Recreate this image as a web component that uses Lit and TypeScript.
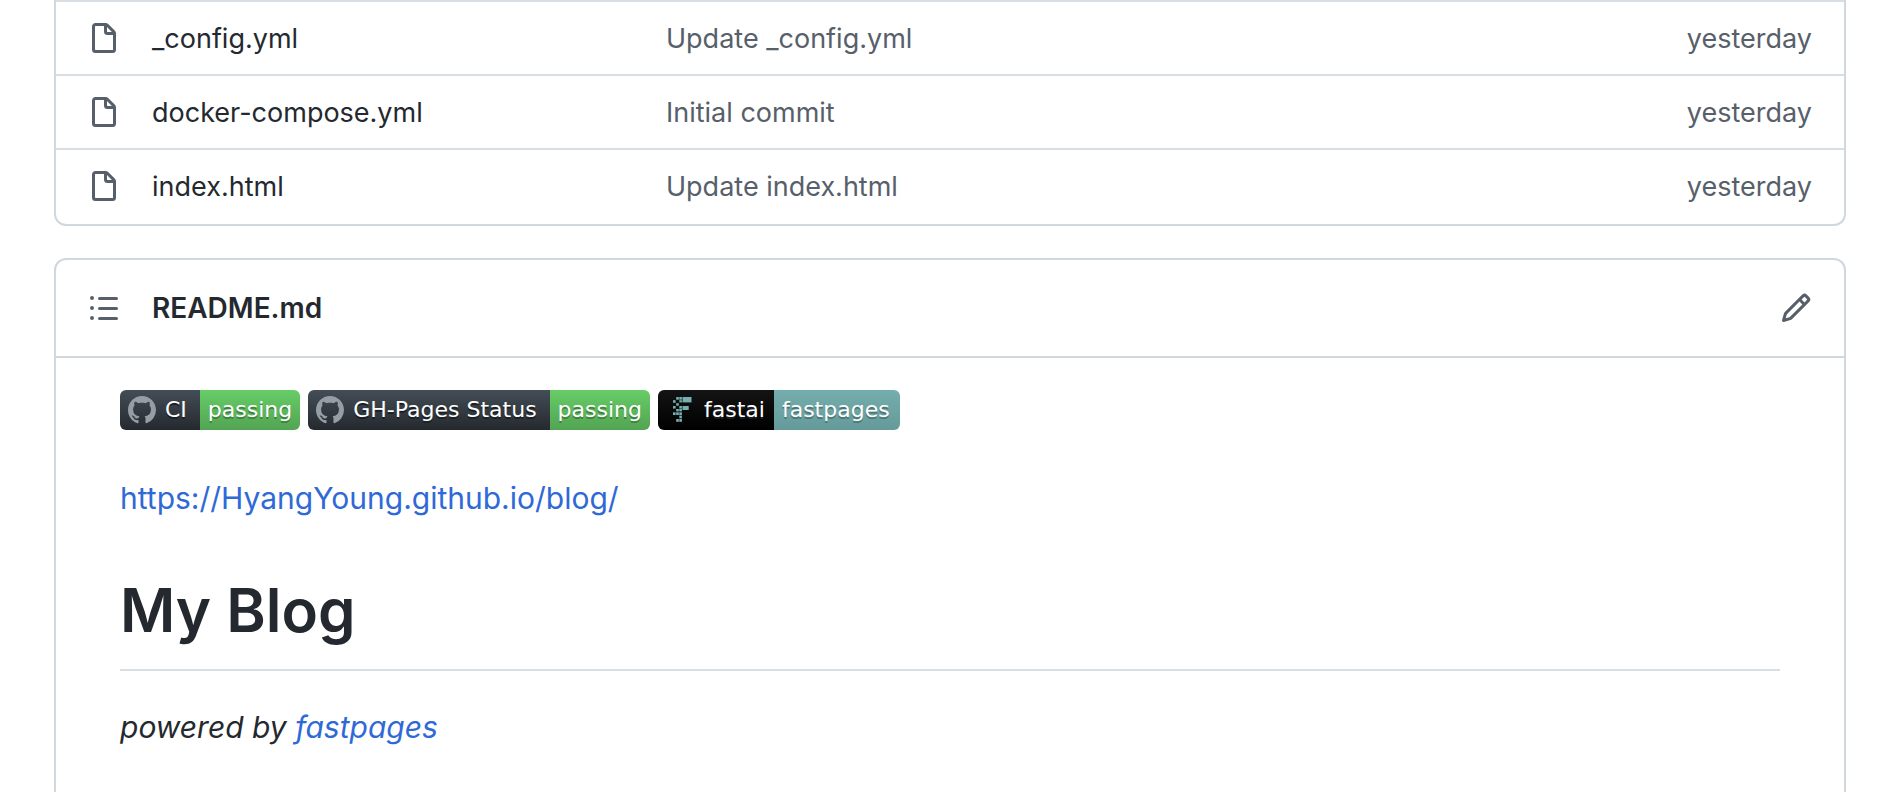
import { LitElement, html, css, svg } from "lit";
import { customElement, property } from "lit/decorators.js";

const FILES = [
  { name: "_config.yml", message: "Update _config.yml", age: "yesterday" },
  { name: "docker-compose.yml", message: "Initial commit", age: "yesterday" },
  { name: "index.html", message: "Update index.html", age: "yesterday" },
];

const OCTICONS = {
  file: "M3.75 1.5a.25.25 0 00-.25.25v11.5c0 .138.112.25.25.25h8.5a.25.25 0 00.25-.25V6H9.75A1.75 1.75 0 018 4.25V1.5H3.75zm5.75.56v2.19c0 .138.112.25.25.25h2.19L9.5 2.06zM2 1.75C2 .784 2.784 0 3.75 0h5.086c.464 0 .909.184 1.237.513l3.414 3.414c.329.328.513.773.513 1.237v8.086A1.75 1.75 0 0112.25 15h-8.5A1.75 1.75 0 012 13.25V1.75z",
  list: "M2 4a1 1 0 100-2 1 1 0 000 2zm3.75-1.5a.75.75 0 000 1.5h8.5a.75.75 0 000-1.5h-8.5zm0 5a.75.75 0 000 1.5h8.5a.75.75 0 000-1.5h-8.5zm0 5a.75.75 0 000 1.5h8.5a.75.75 0 000-1.5h-8.5zM3 8a1 1 0 11-2 0 1 1 0 012 0zm-1 6a1 1 0 100-2 1 1 0 000 2z",
  pencil: "M11.013 1.427a1.75 1.75 0 012.474 0l1.086 1.086a1.75 1.75 0 010 2.474l-8.61 8.61c-.21.21-.47.364-.756.445l-3.251.93a.75.75 0 01-.927-.928l.929-3.25a1.75 1.75 0 01.445-.758l8.61-8.61zm1.414 1.06a.25.25 0 00-.354 0L10.811 3.75l1.439 1.44 1.263-1.263a.25.25 0 000-.354l-1.086-1.086zM11.189 6.25L9.75 4.81l-6.286 6.287a.25.25 0 00-.064.108l-.558 1.953 1.953-.558a.249.249 0 00.108-.064l6.286-6.286z",
  mark: "M8 0C3.58 0 0 3.58 0 8c0 3.54 2.29 6.53 5.47 7.59.4.07.55-.17.55-.38 0-.19-.01-.82-.01-1.49-2.01.37-2.53-.49-2.69-.94-.09-.23-.48-.94-.82-1.13-.28-.15-.68-.52-.01-.53.63-.01 1.08.58 1.23.82.72 1.21 1.87.87 2.33.66.07-.52.28-.87.51-1.07-1.78-.2-3.64-.89-3.64-3.95 0-.87.31-1.59.82-2.15-.08-.2-.36-1.02.08-2.12 0 0 .67-.21 2.2.82.64-.18 1.32-.27 2-.27.68 0 1.36.09 2 .27 1.53-1.04 2.2-.82 2.2-.82.44 1.1.16 1.92.08 2.12.51.56.82 1.27.82 2.15 0 3.07-1.87 3.75-3.65 3.95.29.25.54.73.54 1.48 0 1.07-.01 1.93-.01 2.2 0 .21.15.46.55.38A8.013 8.013 0 0016 8c0-4.42-3.58-8-8-8z",
};

const octicon = (name: keyof typeof OCTICONS) =>
  html`<svg class="icon ${name}" viewBox="0 0 16 16" aria-hidden="true"><path fill-rule="evenodd" d=${OCTICONS[name]}></path></svg>`;

// Blocks of the fast.ai mark: x, y, width, height
const BLOCKS = [
  [3.2, 0, 2.6, 2.7], [6.3, 0, 2.6, 2.7], [9.5, 0, 9, 5.4],
  [0, 3.2, 2.6, 2.6], [6.3, 3.2, 2.6, 2.2],
  [3.2, 6.2, 2.6, 2.5],
  [0, 9, 2.6, 2.6], [6.3, 9, 2.6, 2.6], [9.5, 9, 6.2, 4],
  [3.2, 12, 2.6, 2.4], [6.3, 12, 2.6, 2.4],
  [0, 15.3, 2.6, 2.7], [3.2, 15.3, 2.6, 2.7], [6.3, 15.3, 2.6, 2.7],
  [6.3, 18.6, 2.6, 2.7], [3.2, 22, 2.6, 2.8], [6.3, 22, 2.6, 2.8],
];

@customElement("status-badge")
class StatusBadge extends LitElement {
  @property() label = "";
  @property() value = "";
  @property({ reflect: true }) kind = "github";

  static styles = css`
    :host { display: inline-flex; }
    a {
      display: flex;
      height: 40px;
      border-radius: 6px;
      overflow: hidden;
      color: #fff;
      font: 22px/40px "DejaVu Sans", sans-serif;
      text-decoration: none;
      white-space: nowrap;
    }
    .label, .value { display: flex; align-items: center; }
    .label {
      gap: 9px;
      padding: 0 13px 0 8px;
      background: linear-gradient(#444d56, #24292e);
      text-shadow: 0 2px 0 #1b1f23;
    }
    .value {
      padding: 0 8px;
      background: linear-gradient(#67cd67, #53a453);
      text-shadow: 0 2px 0 #3f803f;
    }
    .icon { display: block; width: 28px; height: 28px; fill: #959da5; }
    :host([kind="fastai"]) .label {
      padding: 0 9px 0 15px;
      gap: 12px;
      background: linear-gradient(#141414, #000);
    }
    :host([kind="fastai"]) .value {
      padding: 0 10px 0 8px;
      background: linear-gradient(#75aeae, #649a9a);
      text-shadow: 0 2px 0 #4d7575;
    }
    .blocks { display: block; width: 19px; height: 26px; fill: #76b0b0; }
  `;

  render() {
    return html`<a href="#"><span class="label">${this.kind === "fastai"
      ? html`<svg class="blocks" viewBox="0 0 19 26" aria-hidden="true">${BLOCKS.map(
          ([x, y, w, h]) => svg`<rect x=${x} y=${y} width=${w} height=${h}></rect>`)}</svg>`
      : octicon("mark")}<span>${this.label}</span></span><span class="value">${this.value}</span></a>`;
  }
}

@customElement("app-root")
class AppRoot extends LitElement {
  static styles = css`
    :host {
      box-sizing: border-box;
      display: flex;
      flex-direction: column;
      gap: 32px;
      min-height: 100vh;
      padding: 0 46px 0 54px;
      background: #fff;
      color: #24292f;
      font: 28px/40px Inter, "Liberation Sans", sans-serif;
    }
    a { color: #2f69d6; text-decoration: none; }
    .icon { display: block; width: 32px; height: 32px; fill: #57606a; }
    .files {
      border: 2px solid #d0d7de;
      border-top: 0;
      border-radius: 0 0 12px 12px;
    }
    table { width: 100%; border-collapse: separate; border-spacing: 0; table-layout: fixed; }
    td { height: 70px; padding: 2px 0 0; border-top: 2px solid #d8dee4; color: #57606a; font-size: 27px; }
    tr:last-child td { padding-bottom: 2px; }
    .kind { width: 64px; padding-left: 32px; }
    .name { width: 514px; }
    .name a { color: #24292f; }
    .age { width: 180px; padding-right: 32px; text-align: right; }
    .readme {
      display: flex;
      flex-direction: column;
      flex: 1;
      border: 2px solid #d0d7de;
      border-bottom: 0;
      border-radius: 12px 12px 0 0;
    }
    header {
      display: flex;
      align-items: center;
      gap: 32px;
      padding: 28px 32px;
      border-bottom: 2px solid #d0d7de;
    }
    h2 { flex: 1; margin: 0; font-size: 28px; line-height: 40px; font-weight: 600; }
    button { padding: 0; border: 0; background: none; }
    article { padding: 32px 64px 0; font-size: 30px; line-height: 48px; }
    p { margin: 0; }
    .badges { display: flex; gap: 8px; margin-bottom: 44px; }
    h1 {
      margin: 48px 0 32px;
      padding-bottom: 19px;
      border-bottom: 2px solid #d8dee4;
      font-size: 60px;
      line-height: 80px;
      font-weight: 600;
    }
  `;

  render() {
    return html`
      <section class="files">
        <table aria-label="Files">
          <tbody>
            ${FILES.map((file) => html`<tr>
              <td class="kind">${octicon("file")}</td>
              <td class="name"><a href="#">${file.name}</a></td>
              <td>${file.message}</td>
              <td class="age">${file.age}</td>
            </tr>`)}
          </tbody>
        </table>
      </section>
      <section class="readme">
        <header>
          <button type="button" aria-label="Table of contents">${octicon("list")}</button>
          <h2>README.md</h2>
          <button type="button" aria-label="Edit file">${octicon("pencil")}</button>
        </header>
        <article>
          <p class="badges">
            <status-badge label="CI" value="passing"></status-badge>
            <status-badge label="GH-Pages Status" value="passing"></status-badge>
            <status-badge kind="fastai" label="fastai" value="fastpages"></status-badge>
          </p>
          <p><a href="#">https://HyangYoung.github.io/blog/</a></p>
          <h1>My Blog</h1>
          <p><em>powered by <a href="#">fastpages</a></em></p>
        </article>
      </section>
    `;
  }
}
